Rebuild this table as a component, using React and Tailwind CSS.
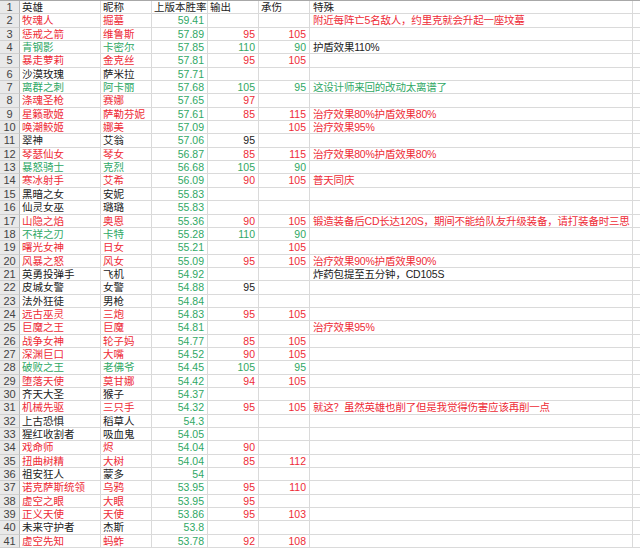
import React from "react";

const R = "#ee2b36";
const G = "#2fa865";
const K = "#222222";

// hero, nick, rate, out, tank, special, color, specialColor
const rows = [
  ["牧魂人", "掘墓", "59.41", "", "", "附近每阵亡5名敌人，约里克就会升起一座坟墓", R, R],
  ["惩戒之箭", "维鲁斯", "57.89", "95", "105", "", R, R],
  ["青钢影", "卡密尔", "57.85", "110", "90", "护盾效果110%", G, K],
  ["暴走萝莉", "金克丝", "57.81", "95", "105", "", R, R],
  ["沙漠玫瑰", "萨米拉", "57.71", "", "", "", K, K],
  ["离群之刺", "阿卡丽", "57.68", "105", "95", "这设计师来回的改动太离谱了", G, G],
  ["涤魂圣枪", "赛娜", "57.65", "97", "", "", R, R],
  ["星籁歌姬", "萨勒芬妮", "57.61", "85", "115", "治疗效果80%护盾效果80%", R, R],
  ["唤潮鲛姬", "娜美", "57.09", "", "105", "治疗效果95%", R, R],
  ["翠神", "艾翁", "57.06", "95", "", "", K, K],
  ["琴瑟仙女", "琴女", "56.87", "85", "115", "治疗效果80%护盾效果80%", R, R],
  ["暴怒骑士", "克烈", "56.68", "105", "90", "", G, G],
  ["寒冰射手", "艾希", "56.09", "90", "105", "普天同庆", R, R],
  ["黑暗之女", "安妮", "55.83", "", "", "", K, K],
  ["仙灵女巫", "璐璐", "55.83", "", "", "", K, K],
  ["山隐之焰", "奥恩", "55.36", "90", "105", "锻造装备后CD长达120S，期间不能给队友升级装备，请打装备时三思", R, R],
  ["不祥之刃", "卡特", "55.28", "110", "90", "", G, G],
  ["曙光女神", "日女", "55.21", "", "105", "", R, R],
  ["风暴之怒", "风女", "55.09", "95", "105", "治疗效果90%护盾效果90%", R, R],
  ["英勇投弹手", "飞机", "54.92", "", "", "炸药包提至五分钟，CD105S", K, K],
  ["皮城女警", "女警", "54.88", "95", "", "", K, K],
  ["法外狂徒", "男枪", "54.84", "", "", "", K, K],
  ["远古巫灵", "三炮", "54.83", "95", "105", "", R, R],
  ["巨魔之王", "巨魔", "54.81", "", "", "治疗效果95%", R, R],
  ["战争女神", "轮子妈", "54.77", "85", "105", "", R, R],
  ["深渊巨口", "大嘴", "54.52", "90", "105", "", R, R],
  ["破败之王", "老佛爷", "54.45", "105", "95", "", G, G],
  ["堕落天使", "莫甘娜", "54.42", "94", "105", "", R, R],
  ["齐天大圣", "猴子", "54.37", "", "", "", K, K],
  ["机械先驱", "三只手", "54.32", "95", "105", "就这？虽然英雄也削了但是我觉得伤害应该再削一点", R, R],
  ["上古恐惧", "稻草人", "54.3", "", "", "", K, K],
  ["猩红收割者", "吸血鬼", "54.05", "", "", "", K, K],
  ["戏命师", "烬", "54.04", "90", "", "", R, R],
  ["扭曲树精", "大树", "54.04", "85", "112", "", R, R],
  ["祖安狂人", "蒙多", "54", "", "", "", K, K],
  ["诺克萨斯统领", "乌鸦", "53.95", "95", "110", "", R, R],
  ["虚空之眼", "大眼", "53.95", "95", "", "", R, R],
  ["正义天使", "天使", "53.86", "95", "103", "", R, R],
  ["未来守护者", "杰斯", "53.8", "", "", "", K, K],
  ["虚空先知", "蚂蚱", "53.78", "92", "108", "", R, R],
];

const cell = "shrink-0 h-full border-r border-b border-[#dadada] overflow-hidden whitespace-nowrap leading-[13px] text-[10.5px]";

const Row = ({ n, children }) => (
  <div className="flex h-[13.35px] w-[640px] overflow-hidden">
    <div className="w-[20px] shrink-0 h-full bg-[#e9e9e9] border-r border-b border-r-[#b8b8b8] border-b-[#d0d0d0] text-center text-[#444] text-[11px] leading-[13px]">
      {n}
    </div>
    {children}
  </div>
);

export default function App() {
  return (
    <div
      className="w-[640px] h-[549px] overflow-hidden bg-white border-t border-[#a8a8a8]"
      style={{ fontFamily: '"Liberation Sans", "Noto Sans CJK SC", sans-serif' }}
    >
      <Row n={1}>
        <div className={`${cell} w-[81px] pl-[2px] text-[#222]`}>英雄</div>
        <div className={`${cell} w-[51px] pl-[2px] text-[#222]`}>昵称</div>
        <div className={`${cell} w-[56px] pl-[2px] text-[#222]`}>上版本胜率</div>
        <div className={`${cell} w-[51px] pl-[2px] text-[#222]`}>输出</div>
        <div className={`${cell} w-[51px] pl-[2px] text-[#222]`}>承伤</div>
        <div className={`${cell} w-[323px] pl-[3px] text-[#222]`}>特殊</div>
        <div className={`${cell} w-[20px]`}></div>
      </Row>
      {rows.map((r, i) => {
        const [hero, nick, rate, out, tank, special, color, sColor] = r;
        return (
          <Row key={i} n={i + 2}>
            <div className={`${cell} w-[81px] pl-[2px]`} style={{ color }}>{hero}</div>
            <div className={`${cell} w-[51px] pl-[2px]`} style={{ color }}>{nick}</div>
            <div className={`${cell} w-[56px] pr-[3px] text-right text-[#2fa865]`}>{rate}</div>
            <div className={`${cell} w-[51px] pr-[3px] text-right`} style={{ color }}>{out}</div>
            <div className={`${cell} w-[51px] pr-[3px] text-right`} style={{ color }}>{tank}</div>
            <div className={`${cell} w-[323px] pl-[3px] tracking-[-0.2px]`} style={{ color: sColor }}>{special}</div>
            <div className={`${cell} w-[20px]`}></div>
          </Row>
        );
      })}
    </div>
  );
}
